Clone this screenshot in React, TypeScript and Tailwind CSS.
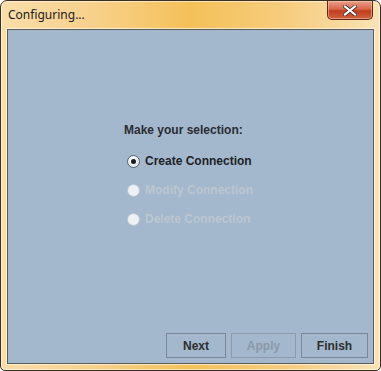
import React from "react";

function Radio({ checked, disabled }: { checked?: boolean; disabled?: boolean }) {
  return (
    <span
      className={`flex h-[13px] w-[13px] items-center justify-center rounded-full border ${
        disabled ? "border-[#b9c6d4] bg-[#eef0f3]" : "border-[#5b6470] bg-[radial-gradient(circle_at_40%_35%,#ffffff,#d9dde2)]"
      }`}
    >
      {checked && <span className="h-[5px] w-[5px] rounded-full bg-[#1c1c1c]" />}
    </span>
  );
}

function Btn({ label, w, disabled }: { label: string; w: string; disabled?: boolean }) {
  return (
    <div
      className={`flex h-[25px] items-center justify-center border text-[12px] font-bold ${w} ${
        disabled ? "border-[#8e9aa8] text-[#8a98a8]" : "border-[#7b8796] text-[#2e2e2e]"
      }`}
    >
      {label}
    </div>
  );
}

export default function App() {
  const options = [
    { label: "Create Connection", checked: true },
    { label: "Modify Connection", disabled: true },
    { label: "Delete Connection", disabled: true },
  ];

  return (
    <div className="h-[371px] w-[381px] bg-white">
      <div className="flex h-full w-full flex-col rounded-t-[7px] rounded-b-[5px] border border-[#3b3020] bg-[linear-gradient(90deg,#f9deaa_0%,#f7d08a_25%,#f4c158_50%,#f6cc7e_75%,#fae3b5_100%)] shadow-[inset_0_0_0_1px_rgba(255,255,255,0.55)]">
        {/* Title bar */}
        <div className="flex h-[28px] shrink-0 items-start justify-between">
          <span
            className="pl-[7px] pt-[5px] text-[12px] text-[#1a1a1a]"
            style={{ fontFamily: '"Noto Sans", "Open Sans", sans-serif' }}
          >
            Configuring...
          </span>
          <div className="mr-[7px] flex h-[19px] w-[46px] items-center justify-center rounded-b-[5px] border border-t-0 border-[#5a2a1c] bg-[linear-gradient(180deg,#e9a08a_0%,#d9664a_45%,#c23f1e_55%,#d0603e_100%)] shadow-[inset_0_0_0_1px_rgba(255,220,200,0.45)]">
            <svg width="14" height="11" viewBox="0 0 14 11">
              <path d="M2 1.5 L12 9.5 M12 1.5 L2 9.5" stroke="#3a2a28" strokeWidth="3.6" strokeLinecap="square" />
              <path d="M2 1.5 L12 9.5 M12 1.5 L2 9.5" stroke="#ffffff" strokeWidth="2.2" strokeLinecap="square" />
            </svg>
          </div>
        </div>

        {/* Content */}
        <div className="mx-[6px] mb-[6px] flex flex-1 flex-col border border-[#5c5a55] bg-[#a3b8cd] shadow-[0_0_0_1px_rgba(255,250,235,0.7)]"
          style={{ fontFamily: '"Liberation Sans", Arial, sans-serif' }}
        >
          <div className="flex flex-1 flex-col pl-[116px] pt-[92px]">
            <div className="h-[16px] text-[12px] leading-[16px] font-bold text-[#2b2b33]">Make your selection:</div>
            <div className="mt-[13px] flex flex-col gap-[9px] pl-[3px]">
              {options.map((o) => (
                <div key={o.label} className="flex h-[20px] items-center gap-[5px]">
                  <Radio checked={o.checked} disabled={o.disabled} />
                  <span className={`text-[12px] font-bold ${o.disabled ? "text-[#bcc6d1]" : "text-[#1f1f28]"}`}>{o.label}</span>
                </div>
              ))}
            </div>
          </div>
          <div className="flex justify-end gap-[5px] pb-[5px] pr-[5px]">
            <Btn label="Next" w="w-[60px]" />
            <Btn label="Apply" w="w-[65px]" disabled />
            <Btn label="Finish" w="w-[67px]" />
          </div>
        </div>
      </div>
    </div>
  );
}
